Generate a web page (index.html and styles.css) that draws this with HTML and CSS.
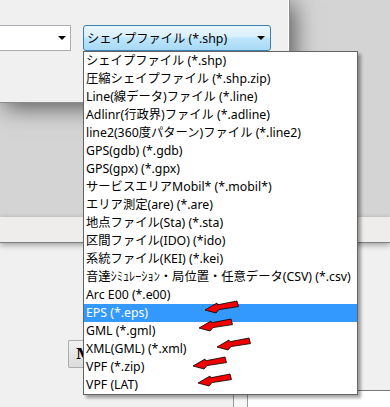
FILE: index.html
```html
<!DOCTYPE html>
<html>
<head>
	<title>ファイル形式</title>
	<link rel="stylesheet" href="styles.css">
</head>
<body>
	<div class="stage">
		<div class="dialog">
			<div class="combo-left"><span class="arrow"></span></div>
			<div class="combo-sel">
				<span>シェイプファイル (*.shp)</span>
				<span class="arrow"></span>
			</div>
		</div>
		<div class="gap"></div>
		<div class="strip"></div>
		<div class="lower">
			<div class="btn">M</div>
			<div class="tray"><div class="tray-in"></div></div>
		</div>

		<ul class="droplist">
			<li>シェイプファイル (*.shp)</li>
			<li>圧縮シェイプファイル (*.shp.zip)</li>
			<li>Line(線データ)ファイル (*.line)</li>
			<li>Adlinr(行政界)ファイル (*.adline)</li>
			<li>line2(360度パターン)ファイル (*.line2)</li>
			<li>GPS(gdb) (*.gdb)</li>
			<li>GPS(gpx) (*.gpx)</li>
			<li>サービスエリアMobil* (*.mobil*)</li>
			<li>エリア測定(are) (*.are)</li>
			<li>地点ファイル(Sta) (*.sta)</li>
			<li>区間ファイル(IDO) (*ido)</li>
			<li>系統ファイル(KEI) (*.kei)</li>
			<li>音達ｼﾐｭﾚｰｼｮﾝ・局位置・任意データ(CSV) (*.csv)</li>
			<li>Arc E00 (*.e00)</li>
			<li class="selected">EPS (*.eps)</li>
			<li>GML (*.gml)</li>
			<li>XML(GML) (*.xml)</li>
			<li>VPF (*.zip)</li>
			<li>VPF (LAT)</li>
		</ul>

		<svg class="marks" width="70" height="90" viewBox="0 0 70 90">
			<defs>
				<polygon id="redArrow" points="0,9 12,2 12.5,3.8 32,0 33.5,5.6 14,8.6 11,12"/>
			</defs>
			<use href="#redArrow" x="15" y="3"/>
			<use href="#redArrow" x="9" y="21"/>
			<use href="#redArrow" x="27" y="40"/>
			<use href="#redArrow" x="3" y="59"/>
			<use href="#redArrow" x="8" y="76"/>
		</svg>
	</div>
</body>
</html>
```

FILE: styles.css
```css
body{
	margin: 0;
	background-color: #d4d4d4;
	font-family: "Noto Sans", "Noto Sans CJK JP", sans-serif;
	font-size: 12.3px;
	color: #000;
}
.stage{
	position: relative;
	width: 390px;
	height: 407px;
	overflow: hidden;
}
.dialog{
	position: relative;
	z-index: 1;
	box-sizing: border-box;
	width: 290px;
	height: 103px;
	padding-top: 25px;
	display: flex;
	gap: 12px;
	background-color: #f0f0f0;
	border-right: 1px solid #8c8c8c;
	border-bottom: 1px solid #8c8c8c;
	box-shadow: 4px 4px 22px rgba(0,0,0,0.6), inset -1px 0 0 #fff;
}
.combo-left{
	box-sizing: border-box;
	width: 71px;
	height: 26px;
	background-color: #fff;
	border: 1px solid #abadb3;
	border-left: none;
	display: flex;
	align-items: center;
	justify-content: flex-end;
	padding-right: 4px;
}
.combo-sel{
	box-sizing: border-box;
	width: 188px;
	height: 26px;
	border: 1px solid #3c7fb1;
	border-radius: 3px;
	background: linear-gradient(#eaf6fd, #d9f0fc 45%, #bee6fd 50%, #a7d9f5);
	display: flex;
	align-items: center;
	justify-content: space-between;
	padding: 0 5px 0 3px;
}
.arrow{
	width: 0;
	height: 0;
	border-left: 4px solid transparent;
	border-right: 4px solid transparent;
	border-top: 4px solid #000;
}
.gap{
	height: 114px;
}
.strip{
	position: relative;
	z-index: 1;
	height: 25px;
	background-color: #efedec;
	border-bottom: 1px solid #7e7e7e;
	box-shadow: 0 2px 6px rgba(0,0,0,0.35);
}
.lower{
	height: 164px;
	background-color: #f0f0f0;
	display: flex;
	flex-direction: column;
}
.btn{
	box-sizing: border-box;
	width: 16px;
	height: 28px;
	margin: 97px 0 0 68px;
	overflow: hidden;
	background: linear-gradient(#f2f2f2, #dcdcdc);
	border: 1px solid #acacac;
	border-right: none;
	border-radius: 2px 0 0 2px;
	font-family: "DejaVu Serif", serif;
	font-weight: bold;
	font-size: 15px;
	line-height: 26px;
	padding-left: 7px;
}
.tray{
	margin: 22px 0 0 233px;
	flex: 1;
	border-left: 1px solid #9a9a9a;
	background-color: #f7f7f7;
}
.tray-in{
	margin-left: 13px;
	height: 100%;
	border-left: 1px solid #9a9a9a;
	border-top: 1px solid #777;
	background-color: #fff;
}
.droplist{
	position: absolute;
	left: 83px;
	top: 51px;
	z-index: 2;
	width: 273px;
	margin: 0;
	padding: 0;
	list-style: none;
	background-color: #fff;
	border: 1px solid #646464;
	box-shadow: 3px 3px 3px rgba(0,0,0,0.35);
}
.droplist li{
	height: 18px;
	line-height: 18px;
	padding-left: 2px;
	white-space: nowrap;
	overflow: hidden;
}
.droplist .selected{
	background-color: #3399ff;
	color: #fff;
}
.marks{
	position: absolute;
	left: 190px;
	top: 298px;
	z-index: 3;
}
.marks use{
	fill: #f00000;
	stroke: #000;
	stroke-width: 0.8;
	stroke-linejoin: round;
}
```
